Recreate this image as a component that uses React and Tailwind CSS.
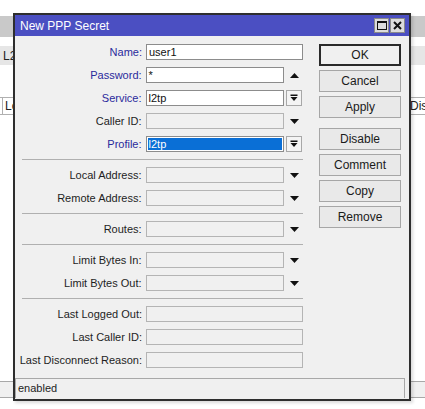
import React from 'react';

const font = "font-['Liberation_Sans',Arial,sans-serif]";

function DownTri() {
  return (
    <svg width="9" height="5" viewBox="0 0 9 5">
      <polygon points="0,0 9,0 4.5,5" fill="#111" />
    </svg>
  );
}

function UpTri() {
  return (
    <svg width="9" height="5" viewBox="0 0 9 5">
      <polygon points="0,5 9,5 4.5,0" fill="#111" />
    </svg>
  );
}

function BoxedDown() {
  return (
    <div className="w-[16px] h-[16px] border border-[#a8a8a8] bg-[#f4f4f4] flex items-center justify-center">
      <svg width="8" height="8" viewBox="0 0 8 8">
        <rect x="0.5" y="0.5" width="7" height="1.5" fill="#111" />
        <polygon points="0.5,3 7.5,3 4,7" fill="#111" />
      </svg>
    </div>
  );
}

function Field({ label, blue, value, enabled, arrow, selected }) {
  const wide = !arrow;
  return (
    <div className="flex items-center h-[16px] mb-[7px]">
      <div
        className={`w-[121px] flex justify-end whitespace-nowrap pr-[1px] leading-none ${
          blue ? 'text-[#2a2a9c]' : 'text-[#1e1e1e]'
        }`}
      >
        <span>{label}:</span>
      </div>
      <div
        className={`ml-[3px] h-[16px] border ${wide ? 'w-[157px]' : 'w-[139px]'} ${
          enabled ? 'bg-white border-[#8c8c8c]' : 'bg-[#f0f0f0] border-[#b4b4b4]'
        } flex items-center`}
      >
        {selected ? (
          <div className="mx-[1px] h-[12px] flex-1 bg-[#0a6fd6] text-white pl-[1px] flex items-center leading-none">
            {value}
          </div>
        ) : (
          <span className="pl-[2px] text-[#111] leading-none">{value}</span>
        )}
      </div>
      {arrow && (
        <div className="w-[18px] h-[16px] flex items-center justify-center ml-[1px]">
          {arrow === 'down' && <DownTri />}
          {arrow === 'up' && <UpTri />}
          {arrow === 'box' && <BoxedDown />}
        </div>
      )}
    </div>
  );
}

function Sep() {
  return <div className="h-px bg-[#b0b0b0] mb-[7px]" />;
}

function Btn({ children, primary, className = '' }) {
  return (
    <div
      className={`h-[22px] flex items-center justify-center text-[12px] text-[#1a1a1a] ${
        primary ? 'border-2 border-[#2a2a2a] bg-[#f0f0f0]' : 'border border-[#a6a6a6] bg-[#e9e9e9]'
      } ${className}`}
    >
      {children}
    </div>
  );
}

export default function App() {
  return (
    <div className={`relative w-[425px] h-[409px] bg-white overflow-hidden text-[11px] ${font}`}>
      {/* window behind the dialog */}
      <div className="absolute inset-0 pt-[16px] flex flex-col text-[12px] text-[#222]">
        <div className="h-[21px] bg-[#c9c9c9]" />
        <div className="h-[9px]" />
        <div className="h-[19px] bg-[#e6e6e6] flex items-center pl-[3px]">L2</div>
        <div className="h-[32px]" />
        <div className="h-[18px] flex justify-between border-y border-[#b0b0b0]">
          <div className="ml-[2px] border-l border-[#b0b0b0] pl-[2px] flex items-center">Lo</div>
          <div className="w-[15px] overflow-hidden whitespace-nowrap flex items-center">Disc</div>
        </div>
        <div className="flex-1" />
        <div className="h-[17px] mb-[11px] border-y border-[#a8a8a8] bg-[#f0f0f0]" />
      </div>

      {/* dialog */}
      <div className="absolute left-[13px] top-[13px] w-[398px] h-[388px] border-2 border-[#2e2e2e] bg-[#f0f0f0] flex flex-col shadow-[2px_2px_3px_rgba(0,0,0,0.15)]">
        <div className="h-[21px] bg-[#4b4fc2] flex items-center justify-between pl-[5px] pr-[4px]">
          <span className="text-white text-[12px]">New PPP Secret</span>
          <div className="flex gap-[1px]">
            <div className="w-[15px] h-[15px] bg-[#dcdcdc] border border-[#8a8a8a] flex items-center justify-center">
              <div className="w-[10px] h-[9px] border-[1.5px] border-[#111] border-t-2" />
            </div>
            <div className="w-[15px] h-[15px] bg-[#dcdcdc] border border-[#8a8a8a] flex items-center justify-center">
              <svg width="9" height="9" viewBox="0 0 9 9">
                <path d="M1 1 L8 8 M8 1 L1 8" stroke="#111" strokeWidth="2" />
              </svg>
            </div>
          </div>
        </div>

        <div className="flex-1 flex pt-[8px]">
          <div className="w-[288px] pl-[7px]">
            <Field label="Name" blue value="user1" enabled />
            <Field label="Password" blue value="*" enabled arrow="up" />
            <Field label="Service" blue value="l2tp" enabled arrow="box" />
            <Field label="Caller ID" arrow="down" />
            <Field label="Profile" blue value="l2tp" enabled arrow="box" selected />
            <Sep />
            <Field label="Local Address" arrow="down" />
            <Field label="Remote Address" arrow="down" />
            <Sep />
            <Field label="Routes" arrow="down" />
            <Sep />
            <Field label="Limit Bytes In" arrow="down" />
            <Field label="Limit Bytes Out" arrow="down" />
            <Sep />
            <Field label="Last Logged Out" />
            <Field label="Last Caller ID" />
            <Field label="Last Disconnect Reason" />
          </div>
          <div className="ml-[16px] w-[82px] flex flex-col gap-[4px]">
            <Btn primary>OK</Btn>
            <Btn>Cancel</Btn>
            <Btn>Apply</Btn>
            <Btn className="mt-[6px]">Disable</Btn>
            <Btn>Comment</Btn>
            <Btn>Copy</Btn>
            <Btn>Remove</Btn>
          </div>
        </div>

        <div className="h-[20px] mr-[4px] mb-px border-t border-x border-[#a8a8a8] flex items-center pl-[2px] text-[#1e1e1e]">
          enabled
        </div>
      </div>
    </div>
  );
}
